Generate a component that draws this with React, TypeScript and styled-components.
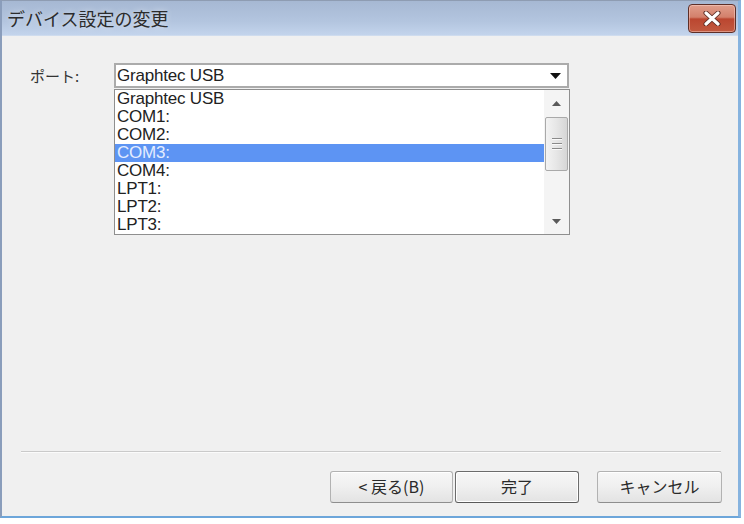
import React from 'react';
import styled, { createGlobalStyle } from 'styled-components';

const GlobalStyle = createGlobalStyle`
  html, body { margin: 0; padding: 0; background: #fff; }
  body { font-family: "Liberation Sans", "Noto Sans CJK JP", sans-serif; }
`;

const Page = styled.div`
  width: 744px;
  height: 524px;
  overflow: hidden;
  background: #fff;
`;

const Window = styled.div`
  box-sizing: border-box;
  width: 741px;
  height: 518px;
  display: flex;
  flex-direction: column;
  border-top: 1px solid #8e9cb2;
  border-left: 2px solid #8a9dbb;
  border-right: 3px solid #86b3df;
  border-bottom: 2px solid #6da6da;
  background: #f0f0f0;
`;

const TitleBar = styled.div`
  height: 35px;
  box-sizing: border-box;
  display: flex;
  justify-content: space-between;
  align-items: flex-start;
  padding: 3px 2px 0 5px;
  background: linear-gradient(#a6b8d3 0%, #b3c5df 60%, #c3d4ec 100%);
  border-bottom: 1px solid #cfdcee;
`;

const Title = styled.div`
  font-family: "Noto Sans CJK JP", sans-serif;
  font-size: 18px;
  line-height: 29px;
  color: #2c2c2c;
  text-shadow: 0 0 6px rgba(255, 255, 255, 0.6);
`;

const CloseButton = styled.div`
  box-sizing: border-box;
  width: 48px;
  height: 29px;
  border: 1px solid #5e2f27;
  border-radius: 4px;
  display: flex;
  align-items: center;
  justify-content: center;
  background: linear-gradient(#e09e8c 0%, #d3806b 45%, #bb4630 52%, #c25a40 100%);
  box-shadow: inset 0 0 0 1px rgba(255, 220, 210, 0.45);
`;

const Body = styled.div`
  flex: 1;
  display: flex;
  flex-direction: column;
  padding: 27px 16px 13px 19px;
`;

const FormRow = styled.div`
  display: flex;
  align-items: flex-start;
  padding-left: 9px;
`;

const Label = styled.div`
  width: 84px;
  font-family: "Noto Sans CJK JP", sans-serif;
  font-size: 15px;
  line-height: 25px;
  color: #333;
`;

const Combo = styled.div`
  position: relative;
  box-sizing: border-box;
  width: 455px;
  height: 25px;
  border: 2px solid #ababab;
  background: #fff;
  display: flex;
  align-items: center;
  justify-content: space-between;
`;

const ComboText = styled.div`
  padding-left: 1px;
  font-size: 17px;
  line-height: 21px;
  color: #222;
  letter-spacing: -0.2px;
`;

const ComboArrow = styled.div`
  width: 24px;
  height: 21px;
  display: flex;
  align-items: center;
  justify-content: center;
`;

const DropList = styled.div`
  position: absolute;
  top: 24px;
  left: -2px;
  box-sizing: border-box;
  width: 456px;
  height: 146px;
  border: 1px solid #8f8f8f;
  background: #fff;
  display: flex;
  z-index: 2;
`;

const Rows = styled.div`
  flex: 1;
  display: flex;
  flex-direction: column;
`;

const Row = styled.div<{ $selected?: boolean }>`
  height: 18px;
  padding-left: 2px;
  font-size: 17px;
  line-height: 18px;
  letter-spacing: -0.2px;
  color: ${(p) => (p.$selected ? '#e4edff' : '#222')};
  background: ${(p) => (p.$selected ? '#5d94f3' : 'transparent')};
`;

const ScrollBar = styled.div`
  width: 25px;
  display: flex;
  flex-direction: column;
  background: #f4f4f4;
`;

const ScrollArrow = styled.div<{ $h: number }>`
  height: ${(p) => p.$h}px;
  display: flex;
  align-items: center;
  justify-content: center;
`;

const Thumb = styled.div`
  box-sizing: border-box;
  height: 54px;
  margin: 0 1px;
  border: 1px solid #a9a9a9;
  border-radius: 2px;
  background: linear-gradient(90deg, #f3f3f3 0%, #e6e6e6 50%, #d6d6d6 100%);
  display: flex;
  flex-direction: column;
  align-items: center;
  justify-content: center;
  gap: 4px;
  padding-bottom: 2px;
`;

const Grip = styled.div`
  width: 10px;
  height: 1px;
  background: #8a8a8a;
  box-shadow: 0 1px 0 #fafafa;
`;

const Track = styled.div`
  flex: 1;
`;

const Spacer = styled.div`
  flex: 1;
`;

const Separator = styled.div`
  border-top: 1px solid #cacaca;
  border-bottom: 1px solid #fbfbfb;
  margin-right: 1px;
`;

const ButtonRow = styled.div`
  display: flex;
  justify-content: flex-end;
  margin-top: 18px;
`;

const Button = styled.div<{ $w: number; $default?: boolean; $gap: number }>`
  box-sizing: border-box;
  width: ${(p) => p.$w}px;
  height: 32px;
  margin-left: ${(p) => p.$gap}px;
  border: 1px solid ${(p) => (p.$default ? '#6c6c6c' : '#b2b2b2')};
  border-bottom-color: ${(p) => (p.$default ? '#5a5a5a' : '#8e8e8e')};
  border-radius: 3px;
  background: linear-gradient(#f7f7f7 0%, #efefef 50%, #e3e3e3 100%);
  box-shadow: ${(p) => (p.$default ? 'inset 0 0 0 1px #ffffff' : 'inset 0 1px 0 #ffffff')};
  display: flex;
  align-items: center;
  justify-content: center;
  font-family: "Noto Sans CJK JP", sans-serif;
  font-size: 16px;
  color: #2a2a2a;
  padding-bottom: 2px;
`;

const items = ['Graphtec USB', 'COM1:', 'COM2:', 'COM3:', 'COM4:', 'LPT1:', 'LPT2:', 'LPT3:'];

export default function App() {
  return (
    <Page>
      <GlobalStyle />
      <Window>
        <TitleBar>
          <Title>デバイス設定の変更</Title>
          <CloseButton>
            <svg width="18" height="15" viewBox="0 0 18 15">
              <path d="M3 2 L15 13 M15 2 L3 13" stroke="#5a2a22" strokeWidth="5" strokeLinecap="round" />
              <path d="M3 2 L15 13 M15 2 L3 13" stroke="#ffffff" strokeWidth="3.2" strokeLinecap="round" />
            </svg>
          </CloseButton>
        </TitleBar>
        <Body>
          <FormRow>
            <Label>ポート:</Label>
            <Combo>
              <ComboText>Graphtec USB</ComboText>
              <ComboArrow>
                <svg width="11" height="6" viewBox="0 0 11 6">
                  <path d="M0 0 H11 L5.5 6 Z" fill="#111" />
                </svg>
              </ComboArrow>
              <DropList>
                <Rows>
                  {items.map((it, i) => (
                    <Row key={it} $selected={i === 3}>
                      {it}
                    </Row>
                  ))}
                </Rows>
                <ScrollBar>
                  <ScrollArrow $h={27}>
                    <svg width="9" height="5" viewBox="0 0 9 5">
                      <path d="M0 5 L4.5 0 L9 5 Z" fill="#5a5a5a" />
                    </svg>
                  </ScrollArrow>
                  <Thumb>
                    <Grip />
                    <Grip />
                    <Grip />
                  </Thumb>
                  <Track />
                  <ScrollArrow $h={25}>
                    <svg width="9" height="5" viewBox="0 0 9 5">
                      <path d="M0 0 L9 0 L4.5 5 Z" fill="#5a5a5a" />
                    </svg>
                  </ScrollArrow>
                </ScrollBar>
              </DropList>
            </Combo>
          </FormRow>
          <Spacer />
          <Separator />
          <ButtonRow>
            <Button $w={123} $gap={0}>&lt; 戻る(B)</Button>
            <Button $w={124} $gap={2} $default>完了</Button>
            <Button $w={125} $gap={18}>キャンセル</Button>
          </ButtonRow>
        </Body>
      </Window>
    </Page>
  );
}
